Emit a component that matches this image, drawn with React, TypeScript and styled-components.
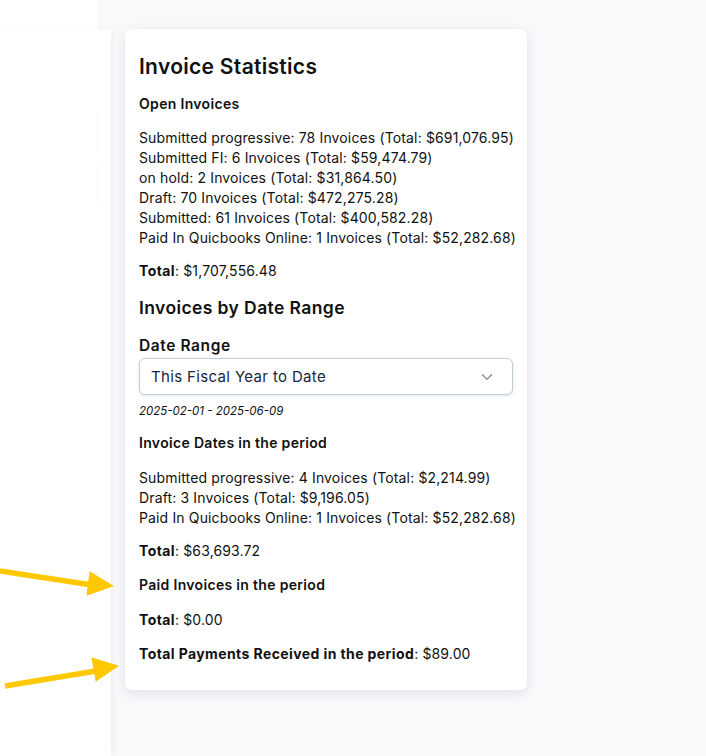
import React from "react";
import styled, { createGlobalStyle } from "styled-components";

const GlobalStyle = createGlobalStyle`
  html, body {
    margin: 0;
    padding: 0;
    height: 100%;
    background: #f8f9fb;
  }
  body {
    font-family: "Inter", "Noto Sans", sans-serif;
    color: #111111;
  }
  #root {
    height: 100%;
  }
  * { box-sizing: border-box; }
`;

const Page = styled.div`
  position: relative;
  display: flex;
  width: 706px;
  height: 756px;
  overflow: hidden;
  background: #f8f9fb;
`;

const Sidebar = styled.aside`
  display: flex;
  flex-direction: column;
  width: 111px;
  flex-shrink: 0;
`;

const SidebarTop = styled.div`
  width: 98px;
  height: 29px;
  background: #ffffff;
`;

const SidebarBody = styled.div`
  flex: 1;
  background: #ffffff;
  box-shadow: 3px 0 6px rgba(0, 0, 0, 0.035);
  padding: 13px 0 0 97px;
`;

const SidebarTick = styled.div<{ $h: number; $mt: number }>`
  width: 1px;
  height: ${(p) => p.$h}px;
  margin-top: ${(p) => p.$mt}px;
  background: #f6f6f6;
`;

const Main = styled.main`
  flex: 1;
  padding: 29px 0 0 14px;
`;

const Card = styled.section`
  width: 402px;
  background: #ffffff;
  border-radius: 7px;
  box-shadow: 0 3px 12px rgba(20, 30, 50, 0.11);
  padding: 26px 14px 26px;
  display: flex;
  flex-direction: column;
`;

const Title = styled.h2`
  margin: 0;
  font-size: 21px;
  line-height: 24px;
  font-weight: 600;
  letter-spacing: 0.3px;
`;

const SectionTitle = styled.h3<{ $mt: number }>`
  margin: ${(p) => p.$mt}px 0 0;
  font-size: 17.5px;
  line-height: 22px;
  font-weight: 600;
  letter-spacing: 0.4px;
`;

const SubHeading = styled.h4<{ $mt: number }>`
  margin: ${(p) => p.$mt}px 0 0;
  font-size: 14px;
  line-height: 20px;
  font-weight: 600;
  letter-spacing: 0.32px;
`;

const LineList = styled.div<{ $mt: number }>`
  margin-top: ${(p) => p.$mt}px;
  display: flex;
  flex-direction: column;
`;

const Line = styled.div`
  font-size: 14px;
  line-height: 20px;
  font-weight: 400;
  letter-spacing: 0.14px;
  white-space: nowrap;
`;

const TotalLine = styled.div<{ $mt: number }>`
  margin-top: ${(p) => p.$mt}px;
  font-size: 14px;
  line-height: 20px;
  letter-spacing: 0.14px;
  b {
    font-weight: 700;
    letter-spacing: 0.4px;
  }
`;

const FieldLabel = styled.label`
  margin-top: 17px;
  font-size: 15.5px;
  line-height: 20px;
  font-weight: 600;
  letter-spacing: 0.6px;
`;

const SelectBox = styled.div`
  margin-top: 2px;
  height: 37px;
  display: flex;
  align-items: center;
  justify-content: space-between;
  padding: 0 18px 0 11px;
  border: 1px solid #c3cfd9;
  border-radius: 6px;
  box-shadow: 0 1px 3px rgba(30, 50, 80, 0.14);
  font-size: 15px;
  letter-spacing: 0.35px;
  color: #17263a;
  background: #ffffff;
`;

const Chevron = styled.svg`
  width: 14px;
  height: 14px;
  color: #8b939c;
`;

const DateHint = styled.div`
  margin-top: 8px;
  font-size: 11.5px;
  line-height: 16px;
  font-style: italic;
`;

const ArrowLayer = styled.svg`
  position: absolute;
  left: 0;
  top: 0;
  width: 706px;
  height: 756px;
  pointer-events: none;
`;

const openLines = [
  "Submitted progressive: 78 Invoices (Total: $691,076.95)",
  "Submitted FI: 6 Invoices (Total: $59,474.79)",
  "on hold: 2 Invoices (Total: $31,864.50)",
  "Draft: 70 Invoices (Total: $472,275.28)",
  "Submitted: 61 Invoices (Total: $400,582.28)",
  "Paid In Quicbooks Online: 1 Invoices (Total: $52,282.68)",
];

const periodLines = [
  "Submitted progressive: 4 Invoices (Total: $2,214.99)",
  "Draft: 3 Invoices (Total: $9,196.05)",
  "Paid In Quicbooks Online: 1 Invoices (Total: $52,282.68)",
];

export default function App() {
  return (
    <>
      <GlobalStyle />
      <Page>
        <Sidebar>
          <SidebarTop />
          <SidebarBody>
            <SidebarTick $h={40} $mt={71} />
            <SidebarTick $h={37} $mt={13} />
          </SidebarBody>
        </Sidebar>
        <Main>
          <Card>
            <Title>Invoice Statistics</Title>
            <SubHeading $mt={15}>Open Invoices</SubHeading>
            <LineList $mt={14}>
              {openLines.map((l) => (
                <Line key={l}>{l}</Line>
              ))}
            </LineList>
            <TotalLine $mt={13}>
              <b>Total</b>: $1,707,556.48
            </TotalLine>
            <SectionTitle $mt={16}>Invoices by Date Range</SectionTitle>
            <FieldLabel>Date Range</FieldLabel>
            <SelectBox>
              <span>This Fiscal Year to Date</span>
              <Chevron viewBox="0 0 14 14" fill="none">
                <path
                  d="M2.5 4.8 L7 9.2 L11.5 4.8"
                  stroke="currentColor"
                  strokeWidth="1.5"
                  strokeLinecap="round"
                  strokeLinejoin="round"
                />
              </Chevron>
            </SelectBox>
            <DateHint>2025-02-01 - 2025-06-09</DateHint>
            <SubHeading $mt={14}>Invoice Dates in the period</SubHeading>
            <LineList $mt={15}>
              {periodLines.map((l) => (
                <Line key={l}>{l}</Line>
              ))}
            </LineList>
            <TotalLine $mt={13}>
              <b>Total</b>: $63,693.72
            </TotalLine>
            <SubHeading $mt={14}>Paid Invoices in the period</SubHeading>
            <TotalLine $mt={15}>
              <b>Total</b>: $0.00
            </TotalLine>
            <TotalLine $mt={14}>
              <b>Total Payments Received in the period</b>: $89.00
            </TotalLine>
          </Card>
        </Main>
        <ArrowLayer viewBox="0 0 706 756">
          <g fill="#ffc800" stroke="#ffc800">
            <line x1="0" y1="571" x2="92" y2="585" strokeWidth="5.5" />
            <polygon points="90,572 113,586 87,595" strokeWidth="1" />
            <line x1="5" y1="686" x2="96" y2="671" strokeWidth="5.5" />
            <polygon points="92,658 118,666 96,681" strokeWidth="1" />
          </g>
        </ArrowLayer>
      </Page>
    </>
  );
}
